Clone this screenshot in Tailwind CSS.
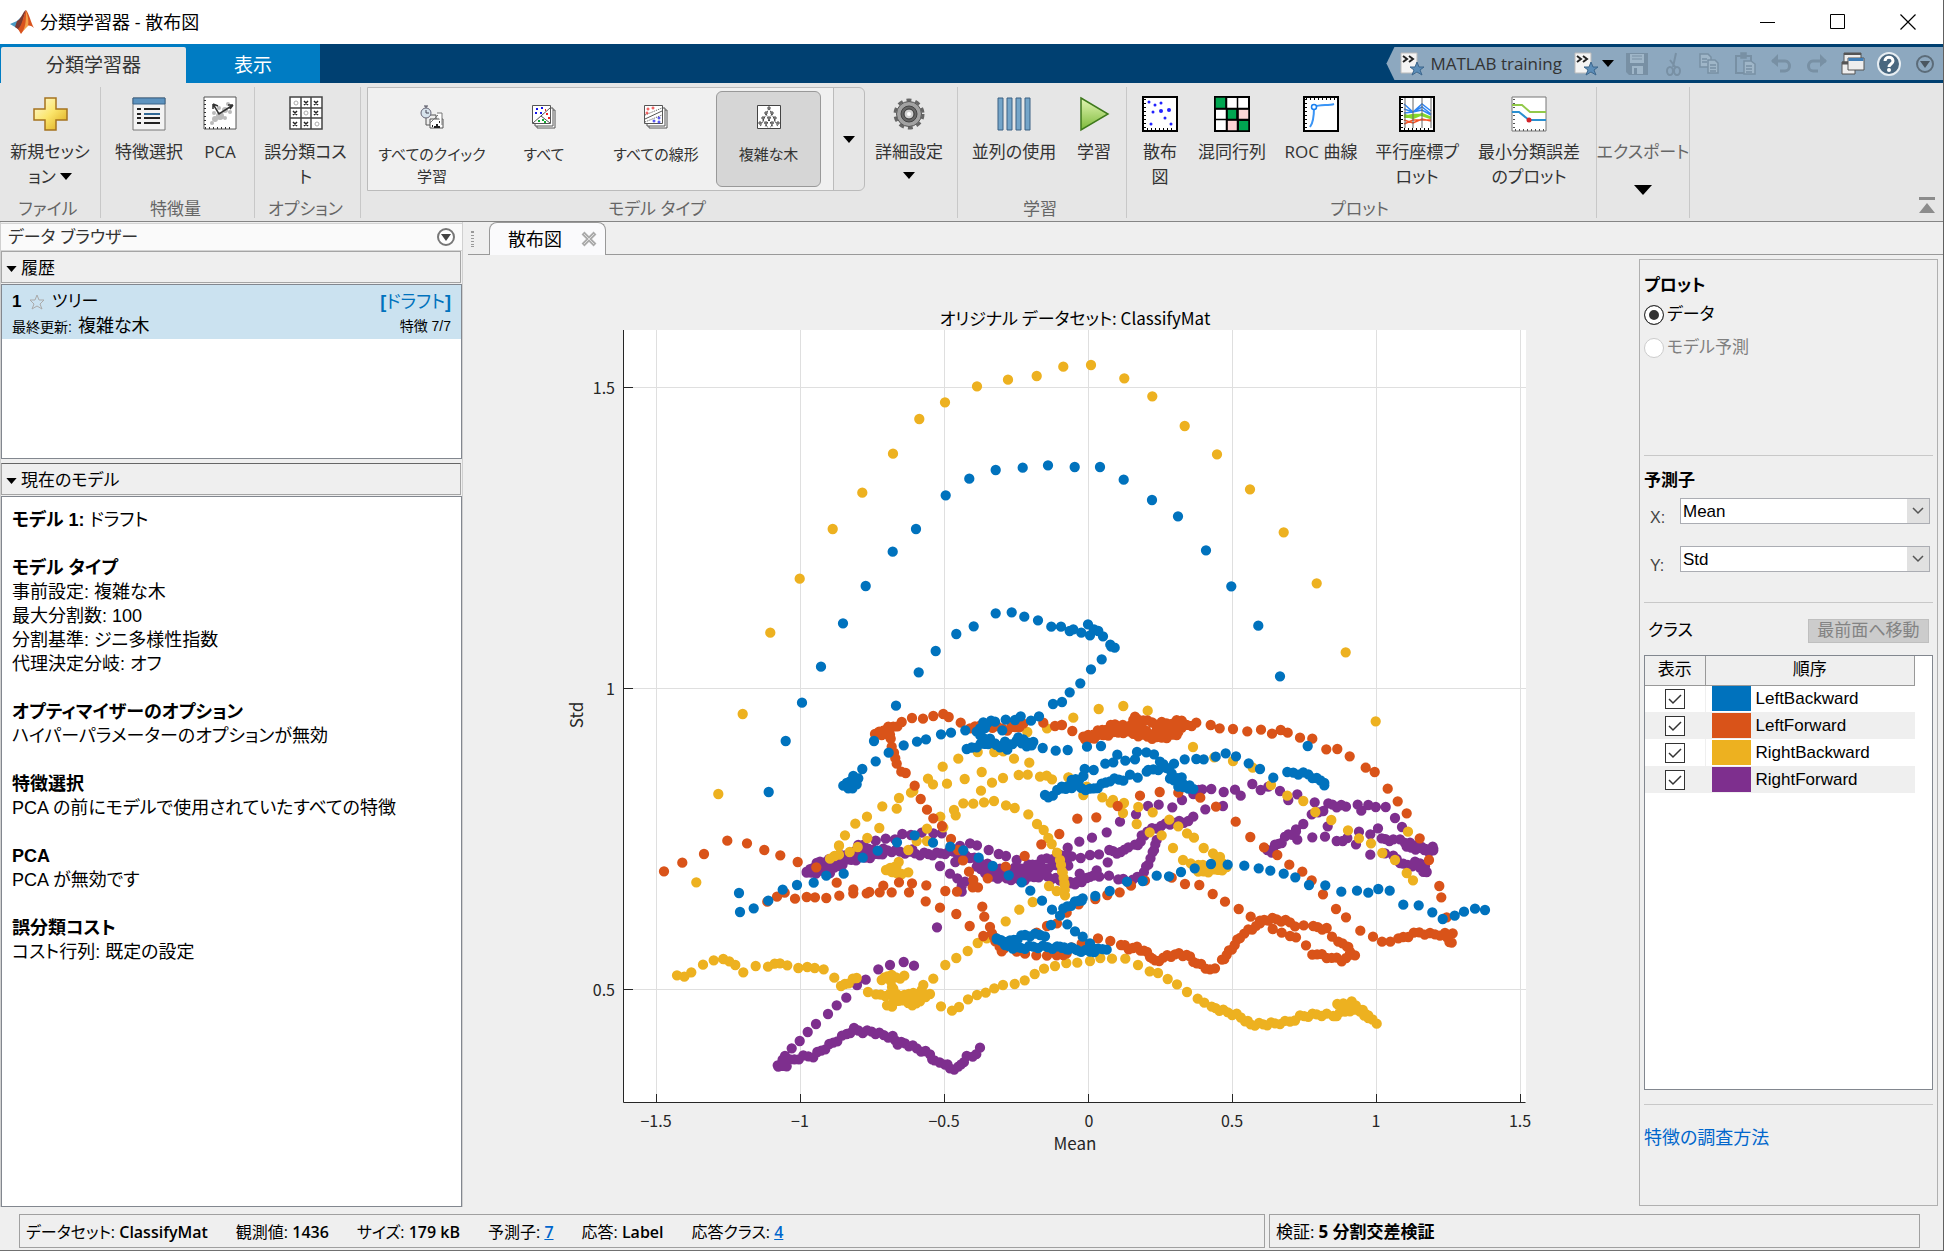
<!doctype html>
<html lang="ja">
  <head>
    <meta charset="UTF-8" />
    <meta name="viewport" content="width=device-width, initial-scale=1" />
    <title>分類学習器 - 散布図</title>
    <script src="https://cdn.jsdelivr.net/npm/@tailwindcss/browser@4"></script>
  </head>
  <body
    class="h-screen min-h-[900px] flex flex-col overflow-hidden bg-[#efefef] border-r border-[#606060] text-black font-['Open_Sans','Noto_Sans_CJK_JP',sans-serif] [font-feature-settings:'palt']"
  >
    <!-- タイトルバー -->
    <header class="h-11 shrink-0 flex items-center bg-white pl-[10px]">
      <svg class="w-6 h-6" viewBox="0 0 24 24">
        <path d="M0 14l7-3 4-4 3 4-5 8-4-2z" fill="#4a9ac4" />
        <path d="M7 11c4-1 6-10 9-11l-4 14-3 6-4-3z" fill="#7b3a33" />
        <path d="M16 0c3 3 5 13 8 18-4-3-6-3-8-1l-5 7-3-5c4-3 5-12 8-19z" fill="#d9531e" />
        <path d="M16 1c2 5 3 10 2 15l-5 5c3-6 3-12 3-20z" fill="#f3a04a" />
      </svg>
      <h1 class="ml-[6px] text-[18px] leading-6">分類学習器 - 散布図</h1>
      <div class="ml-auto flex items-center">
        <button class="w-[70px] h-11 grid place-items-center" aria-label="最小化">
          <svg class="w-4 h-4" viewBox="0 0 16 16"><path d="M0 8.500h15" stroke="#000" /></svg>
        </button>
        <button class="w-[70px] h-11 grid place-items-center" aria-label="最大化">
          <svg class="w-4 h-4" viewBox="0 0 16 16"><path d="M.5.5h14v14h-14z" fill="none" stroke="#000" /></svg>
        </button>
        <button class="w-[70px] h-11 grid place-items-center" aria-label="閉じる">
          <svg class="w-4 h-4" viewBox="0 0 16 16"><path d="M.5.5l15 15M15.500.5l-15 15" stroke="#000" stroke-width="1.200" /></svg>
        </button>
      </div>
    </header>

    <!-- タブとクイックアクセス -->
    <nav class="h-[39px] shrink-0 flex bg-[#004071] text-[19px]">
      <div class="flex bg-[#007cc3] pl-px pt-[3px]">
        <button class="w-[185px] bg-[#e6e6e6] rounded-t-xs text-[#333]">分類学習器</button>
        <button class="w-[134px] text-white">表示</button>
      </div>
      <div
        class="ml-auto my-[3px] pl-[14px] pr-[6px] flex items-center bg-[#8da8bf] [clip-path:polygon(8px_0,100%_0,100%_100%,8px_100%,0_50%)]"
      >
        <button class="flex items-center text-[17px] text-[#333]">
          <svg class="w-6 h-6 mr-[6px]" viewBox="0 0 24 24">
            <path d="M1 1h16v20H1z" fill="#f4f4f4" stroke="#bbb" />
            <path d="M3 4l4 3-4 3M9 4l4 3-4 3" fill="none" stroke="#222" stroke-width="2" />
            <path d="M17 10l2 5h5l-4 3 2 5-5-3-5 3 2-5-4-3h5z" fill="#5b8db8" stroke="#3d678c" />
          </svg>
          MATLAB training
        </button>
        <button class="ml-3 flex items-center" aria-label="お気に入り">
          <svg class="w-6 h-6" viewBox="0 0 24 24">
            <path d="M1 1h16v20H1z" fill="#f4f4f4" stroke="#bbb" />
            <path d="M3 4l4 3-4 3M9 4l4 3-4 3" fill="none" stroke="#222" stroke-width="2" />
            <path d="M17 10l2 5h5l-4 3 2 5-5-3-5 3 2-5-4-3h5z" fill="#5b8db8" stroke="#3d678c" />
          </svg>
          <svg class="ml-1 w-3 h-[7px]" viewBox="0 0 12 7"><path d="M0 0h12L6 7z" /></svg>
        </button>
        <div class="ml-[11px] flex items-center gap-3">
          <button aria-label="保存">
            <svg class="block w-6 h-6" viewBox="0 0 24 24">
              <path d="M1 1h22v22H4l-3-3z" fill="#7890a4" />
              <path d="M5 2h14v9H5zM7 14h11v8H7z" fill="#9fb6c8" />
              <path d="M7 4h10M7 7h10" stroke="#7890a4" />
              <path d="M9 16h3v6H9z" fill="#7890a4" />
            </svg>
          </button>
          <button aria-label="切り取り">
            <svg class="block w-6 h-6" viewBox="0 0 24 24" fill="none" stroke="#7890a4" stroke-width="2">
              <path d="M15 1l-3 14M9 8l6 8" />
              <ellipse cx="9" cy="19" rx="3" ry="4" />
              <ellipse cx="16" cy="19" rx="3" ry="4" />
            </svg>
          </button>
          <button aria-label="コピー">
            <svg class="block w-6 h-6" viewBox="0 0 24 24" fill="#9fb6c8" stroke="#7890a4" stroke-width="1.500">
              <path d="M3 2h8l3 3v10H3z" />
              <path d="M5 7h5M5 10h5" />
              <path d="M11 8h7l3 3v10H11z" />
              <path d="M13 13h6M13 16h6M13 19h6" />
            </svg>
          </button>
          <button aria-label="貼り付け">
            <svg class="block w-6 h-6" viewBox="0 0 24 24" fill="#8da8bf" stroke="#7890a4" stroke-width="1.500">
              <path d="M3 4h15v17H3z" stroke-width="2" />
              <path d="M8 1h5v5H8z" fill="#7890a4" />
              <path d="M11 9h7l4 3v10H11z" fill="#9fb6c8" />
              <path d="M13 14h6M13 17h6M13 20h6" />
            </svg>
          </button>
          <button aria-label="元に戻す">
            <svg class="block w-6 h-6" viewBox="0 0 24 24" fill="none" stroke="#7890a4" stroke-width="3">
              <path d="M3 9h13c6 0 6 10 0 10h-5" />
              <path d="M9 2L2 9l7 6z" fill="#7890a4" stroke="none" />
            </svg>
          </button>
          <button aria-label="やり直し">
            <svg class="block w-6 h-6" viewBox="0 0 24 24" fill="none" stroke="#7890a4" stroke-width="3">
              <path d="M21 9H8c-6 0-6 10 0 10h5" />
              <path d="M15 2l7 7-7 6z" fill="#7890a4" stroke="none" />
            </svg>
          </button>
          <button aria-label="ウィンドウ">
            <svg class="block w-6 h-6" viewBox="0 0 24 24" fill="#eee" stroke="#555">
              <path d="M3 1h17v12H3z" />
              <path d="M3 2h17" stroke-width="2" />
              <path d="M1 10h13v12H1z" />
              <path d="M1 11h13" stroke-width="3" />
              <path d="M7 6h16v12H7z" />
              <path d="M7.500 7.500h15" stroke="#3f7db5" stroke-width="3" />
            </svg>
          </button>
          <button aria-label="ヘルプ">
            <svg class="block w-6 h-6" viewBox="0 0 24 24">
              <circle cx="12" cy="12" r="11" fill="#49677f" stroke="#e6edf2" stroke-width="2" />
              <path d="M8 9c0-5 8-5 8 0 0 3-4 3-4 6" fill="none" stroke="#fff" stroke-width="3" />
              <circle cx="12" cy="18" r="2" fill="#fff" />
            </svg>
          </button>
          <button aria-label="ツールバーのメニュー">
            <svg class="block w-6 h-6" viewBox="0 0 24 24">
              <circle cx="12" cy="12" r="8" fill="none" stroke="#5c6c79" stroke-width="2" />
              <path d="M7 9h10l-5 7z" fill="#4a5660" />
            </svg>
          </button>
        </div>
      </div>
    </nav>

    <!-- リボン -->
    <div
      class="h-[139px] shrink-0 flex bg-[#e6e6e6] border-b border-[#858585] pt-1 pb-[3px] text-[17px] leading-[25px] text-[#333] text-center"
    >
      <section class="w-[101px] shrink-0 flex flex-col border-r border-[#c8c8c8]">
        <div class="flex-1 flex justify-center">
          <button class="w-full pt-[9px] flex flex-col items-center">
            <svg class="w-9 h-9 mb-[7px]" viewBox="0 0 36 36">
              <defs>
                <linearGradient id="gold" x1="0" y1="0" x2="1" y2="1">
                  <stop offset="0" stop-color="#fffce0" />
                  <stop offset=".5" stop-color="#fbe56b" />
                  <stop offset="1" stop-color="#d9a412" />
                </linearGradient>
              </defs>
              <path d="M13 2h11v11h11v11H24v10H13V24H2V13h11z" fill="url(#gold)" stroke="#a5731f" stroke-width="1.500" />
            </svg>
            <span>新規セッシ<br />ョン<svg class="inline ml-1 mb-1 w-3 h-[7px]" viewBox="0 0 12 7"><path d="M0 0h12L6 7z" /></svg></span>
          </button>
        </div>
        <h2 class="pr-1 leading-[19px] text-[#666]">ファイル</h2>
      </section>

      <section class="w-[154px] shrink-0 flex flex-col border-r border-[#c8c8c8]">
        <div class="flex-1 flex pl-2">
          <button class="w-20 pt-[9px] flex flex-col items-center">
            <svg class="w-9 h-9 mb-[7px]" viewBox="0 0 36 36">
              <path d="M2 2h32v32H2z" fill="#f3f3f3" stroke="#777" />
              <path d="M2 2h32v6H2z" fill="#5d93bf" stroke="#3a6387" />
              <path d="M6 13h4M6 18h4M6 22h4M6 27h4M13 13h16M13 22h16M13 27h16" stroke="#222" stroke-width="2" />
              <path d="M13 18h16" stroke="#2f6896" stroke-width="2" />
            </svg>
            特徴選択
          </button>
          <button class="w-[62px] pt-[9px] flex flex-col items-center">
            <svg class="w-9 h-9 mb-[7px]" viewBox="0 0 36 36">
              <path d="M2 1h32v32H2z" fill="#fff" stroke="#555" />
              <g fill="#bbb">
                <circle cx="10" cy="27" r="2" /><circle cx="13" cy="23" r="3" /><circle cx="18" cy="20" r="4" />
                <circle cx="23" cy="14" r="3" /><circle cx="26" cy="8" r="2" /><circle cx="23" cy="22" r="2" />
                <circle cx="12" cy="17" r="2" /><circle cx="28" cy="16" r="2" /><circle cx="17" cy="12" r="2" />
              </g>
              <path d="M31 9L17 18 11 8M31 9l-5 0M31 9l-3 4M11 8v5M11 8l5 2" fill="none" stroke="#333" stroke-width="1.500" />
              <path d="M3 4v28h28" fill="none" stroke="#333" stroke-width="2" stroke-dasharray="1 3" />
            </svg>
            PCA
          </button>
        </div>
        <h2 class="pr-1 leading-[19px] text-[#666]">特徴量</h2>
      </section>

      <section class="w-[106px] shrink-0 flex flex-col border-r border-[#c8c8c8]">
        <button class="flex-1 pt-[9px] pr-1 flex flex-col items-center">
          <svg class="w-9 h-9 mb-[7px]" viewBox="0 0 36 36" fill="none">
            <path d="M2 1h32v32H2z" fill="#fff" />
            <path d="M2 1h32v32H2zM13 1v32M23 1v32M2 12h32M2 22h32" stroke="#444" stroke-width="1.500" />
            <path
              d="M16 5l4 4m0-4l-4 4M26 5l4 4m0-4l-4 4M5 15l4 4m0-4l-4 4M26 15l4 4m0-4l-4 4M5 26l4 4m0-4l-4 4M16 26l4 4m0-4l-4 4"
              stroke="#222" stroke-width="1.500"
            />
            <g stroke="#aaa"><circle cx="8" cy="7" r="2" /><circle cx="18" cy="17" r="2" /><circle cx="29" cy="28" r="2" /></g>
          </svg>
          <span>誤分類コス<br />ト</span>
        </button>
        <h2 class="pr-1 leading-[19px] text-[#666]">オプション</h2>
      </section>

      <section class="w-[597px] shrink-0 flex flex-col border-r border-[#c8c8c8]">
        <div class="flex-1 flex pl-[6px]">
          <div class="h-[104px] flex border border-[#bbb] rounded-r-md text-[15px] leading-[22px]">
            <div class="w-[465px] bg-[#f0f0f0] flex py-[3px] pl-2">
              <button class="w-28 flex flex-col items-center pt-[14px]">
                <svg class="w-6 h-6 mb-[14px]" viewBox="0 0 24 24" fill="#fff" stroke="#555">
                  <path d="M6 10h10v10H6z" fill="#eee" />
                  <path d="M10 14h13v9H10z" />
                  <path d="M17 8h5v12M10 18l8-8" stroke="#777" />
                  <path d="M12 21h1M16 20h2M19 17h1M14 22h6" stroke="#222" stroke-width="2" />
                  <circle cx="6" cy="8" r="5" fill="#d7e3ec" stroke="#667" />
                  <path d="M6 5v3h3M4 1h4M6 1v2" fill="none" stroke="#445" />
                </svg>
                <span>すべてのクイック<br />学習</span>
              </button>
              <button class="w-28 flex flex-col items-center pt-[14px]">
                <svg class="w-6 h-6 mb-[14px]" viewBox="0 0 24 24" fill="#fff" stroke="#555">
                  <path d="M5 5h18v18H5z" />
                  <path d="M3 3h18v18H3z" />
                  <path d="M.5.500h18v18h-18z" />
                  <path d="M1 18L18 3M9 11l9 7" />
                  <path d="M4 4h2M9 3h2M3 8h2M8 8h2" stroke="#11e" stroke-width="2" />
                  <path d="M14 9h2M16 13h2M13 5h1" stroke="#e22" stroke-width="2" />
                  <path d="M6 16h2M10 15h2M12 17h2" stroke="#1a3" stroke-width="2" />
                </svg>
                すべて
              </button>
              <button class="w-28 flex flex-col items-center pt-[14px]">
                <svg class="w-6 h-6 mb-[14px]" viewBox="0 0 24 24" fill="#fff" stroke="#555">
                  <path d="M5 5h18v18H5z" />
                  <path d="M3 3h18v18H3z" />
                  <path d="M.5.500h18v18h-18z" />
                  <path d="M1 14L18 6" />
                  <path d="M1 10l17-7M1 17l17-7" stroke-dasharray="1 1" />
                  <g fill="none" stroke="#e33"><circle cx="4" cy="4" r="1" /><circle cx="9" cy="3" r="1" /><circle cx="3" cy="8" r="1" /></g>
                  <g fill="none" stroke="#22e"><circle cx="10" cy="16" r="1" /><circle cx="15" cy="13" r="1" /><circle cx="15" cy="17" r="1" /></g>
                </svg>
                すべての線形
              </button>
              <button
                class="ml-1 w-[105px] flex flex-col items-center pt-[13px] bg-[#d6d6d6] border border-[#999] rounded-md"
                aria-pressed="true"
              >
                <svg class="w-6 h-6 mb-[14px]" viewBox="0 0 24 24" fill="#fff" stroke="#444">
                  <path d="M.5.500h23v23H.5z" />
                  <path d="M12 3L3 22M12 3l9 19M9 9l7 13M15 9L8 22M6 15l5 8M18 15l-5 8" stroke-dasharray="2 1" />
                  <path d="M11 2h2v2h-2zM8 7h2v2H8zM14 7h2v2h-2zM5 12h2v2H5zM11 12h2v2h-2zM17 12h2v2h-2zM2 17h2v2H2zM8 17h2v2H8zM14 17h2v2h-2zM20 17h2v2h-2z" />
                </svg>
                複雑な木
              </button>
            </div>
            <button class="w-[31px] border-l border-[#bbb] grid place-items-center" aria-label="その他のモデル">
              <svg class="w-3 h-[7px]" viewBox="0 0 12 7"><path d="M0 0h12L6 7z" fill="#000" /></svg>
            </button>
          </div>
          <button class="flex-1 pt-[9px] pr-1 flex flex-col items-center">
            <svg class="w-9 h-9 mb-[7px]" viewBox="0 0 36 36">
              <circle cx="18" cy="18" r="14" fill="none" stroke="#666" stroke-width="3" stroke-dasharray="5 4" />
              <circle cx="18" cy="18" r="12.500" fill="#a2a2a2" stroke="#555" />
              <circle cx="18" cy="18" r="8" fill="#666" stroke="#444" />
              <circle cx="18" cy="18" r="5" fill="#d0d0d0" stroke="#333" />
              <circle cx="18" cy="18" r="2" fill="#fff" />
            </svg>
            詳細設定
            <svg class="mt-2 w-3 h-[7px]" viewBox="0 0 12 7"><path d="M0 0h12L6 7z" fill="#000" /></svg>
          </button>
        </div>
        <h2 class="pr-1 leading-[19px] text-[#666]">モデル タイプ</h2>
      </section>

      <section class="w-[169px] shrink-0 flex flex-col border-r border-[#c8c8c8]">
        <div class="flex-1 flex pl-2">
          <button class="w-24 pt-[9px] flex flex-col items-center">
            <svg class="w-9 h-9 mb-[7px]" viewBox="0 0 36 36">
              <path d="M2 2h5v32H2zM11 2h5v32h-5zM20 2h5v32h-5zM29 2h5v32h-5z" fill="#74a5c9" stroke="#3a6183" />
            </svg>
            並列の使用
          </button>
          <button class="w-16 pt-[9px] flex flex-col items-center">
            <svg class="w-9 h-9 mb-[7px]" viewBox="0 0 36 36">
              <defs>
                <linearGradient id="go" x1="0" y1="0" x2="0" y2="1">
                  <stop offset="0" stop-color="#e4f7b4" />
                  <stop offset="1" stop-color="#7cb93a" />
                </linearGradient>
              </defs>
              <path d="M5 2l27 16L5 34z" fill="url(#go)" stroke="#3f7a1d" stroke-width="1.500" />
            </svg>
            学習
          </button>
        </div>
        <h2 class="pr-1 leading-[19px] text-[#666]">学習</h2>
      </section>

      <section class="w-[470px] shrink-0 flex flex-col border-r border-[#c8c8c8]">
        <div class="flex-1 flex pl-2">
          <button class="w-[50px] pt-[9px] flex flex-col items-center">
            <svg class="w-9 h-9 mb-[7px]" viewBox="0 0 36 36">
              <path d="M1 1h34v34H1z" fill="#fff" stroke="#000" stroke-width="2" />
              <path d="M3 3v30h30" fill="none" stroke="#000" stroke-width="2" stroke-dasharray="1 3" />
              <g fill="#22f">
                <circle cx="7" cy="6" r="1.500" /><circle cx="13" cy="9" r="1.500" /><circle cx="19" cy="7" r="1.500" />
                <circle cx="11" cy="16" r="1.500" /><circle cx="19" cy="15" r="2" /><circle cx="27" cy="14" r="2" />
                <circle cx="23" cy="22" r="1.500" /><circle cx="9" cy="28" r="1.500" /><circle cx="29" cy="28" r="1.500" />
              </g>
            </svg>
            <span>散布<br />図</span>
          </button>
          <button class="w-[94px] pt-[9px] flex flex-col items-center">
            <svg class="w-9 h-9 mb-[7px]" viewBox="0 0 36 36" stroke="#000" stroke-width="1.500">
              <path d="M1 1h34v34H1z" fill="#fff" stroke-width="2" />
              <path d="M1 1h11v12H1zM13 13h10v11H13zM24 24h11v11H24z" fill="#00a651" />
              <path d="M24 13h11v11H24zM13 24h11v11H13z" fill="#fbd5d5" />
              <path d="M12.500 1v34M23.500 1v34M1 12.500h34M1 23.500h34" />
            </svg>
            混同行列
          </button>
          <button class="w-[84px] pt-[9px] flex flex-col items-center">
            <svg class="w-9 h-9 mb-[7px]" viewBox="0 0 36 36" fill="none">
              <path d="M1 1h34v34H1z" fill="#fff" stroke="#000" stroke-width="2" />
              <path d="M3 3h30M3 3v30" stroke="#000" stroke-width="2" stroke-dasharray="1 3" />
              <path d="M7 31c4-5 4-13 4-20 6-3 14-1 20-3" stroke="#3a94f5" stroke-width="2" />
              <circle cx="11" cy="11" r="2.500" stroke="#1a80f0" stroke-width="1.500" fill="#fff" />
            </svg>
            ROC 曲線
          </button>
          <button class="w-[108px] pt-[9px] flex flex-col items-center">
            <svg class="w-9 h-9 mb-[7px]" viewBox="0 0 36 36" fill="none">
              <path d="M1 1h34v34H1z" fill="#fff" stroke="#000" stroke-width="2" />
              <path d="M5 8l9 8 9-8 9 7M5 13l9 3 9-5 9 7M5 17l9-1 9-2 9 5" stroke="#2f86f5" stroke-width="1.500" />
              <path d="M5 21l9-2 9 0 9 3M5 19l9 3 9-4 9 4" stroke="#86d82a" stroke-width="2.500" />
              <path d="M5 28l9-4 9 0 9 0M5 24l9 3 9-4 9 2" stroke="#f5552a" stroke-width="1.500" />
              <path d="M6 2v30M14 2v30M23 2v30M32 2v30" stroke="#666" />
              <path d="M3 3v30h30" stroke="#000" stroke-width="2" stroke-dasharray="1 3" />
            </svg>
            <span>平行座標プ<br />ロット</span>
          </button>
          <button class="w-[116px] pt-[9px] flex flex-col items-center">
            <svg class="w-9 h-9 mb-[7px]" viewBox="0 0 36 36" fill="none">
              <path d="M1 1h34v34H1z" fill="#fff" stroke="#777" />
              <path d="M3 3v31h30" stroke="#555" stroke-width="2" stroke-dasharray="1 3" />
              <path d="M1 9h10l8 7h16" stroke="#92c94a" stroke-width="2" />
              <path d="M1 16h7l10 8h17" stroke="#2b8fd0" stroke-width="2" />
              <circle cx="18" cy="24" r="2.500" fill="#d2232a" />
            </svg>
            <span>最小分類誤差<br />のプロット</span>
          </button>
        </div>
        <h2 class="pr-1 leading-[19px] text-[#666]">プロット</h2>
      </section>

      <section class="w-[93px] shrink-0 border-r border-[#c8c8c8] text-[#666]">
        <button class="w-full pt-[52px] flex flex-col items-center whitespace-nowrap">
          エクスポート
          <svg class="mt-[21px] w-[18px] h-[10px]" viewBox="0 0 18 10"><path d="M0 0h18L9 10z" fill="#000" /></svg>
        </button>
      </section>
      <button class="ml-auto mr-2 self-end mb-1" aria-label="リボンを最小化">
        <svg class="block w-4 h-[17px]" viewBox="0 0 16 17"><path d="M0 0h16v3H0zM8 6l8 10H0z" fill="#8c8c8c" /></svg>
      </button>
    </div>

    <div class="flex-1 min-h-0 flex">
      <!-- データ ブラウザー -->
      <aside
        class="w-[463px] shrink-0 flex flex-col border-l border-r border-[#d0d0d0] pt-px font-['Liberation_Sans','Noto_Sans_CJK_JP',sans-serif]"
      >
        <div class="h-7 shrink-0 flex items-center justify-between bg-[#fafafa] border-y border-[#d4d4d4] pl-[7px] pr-[6px]">
          <h2 class="pt-[2px] text-[17px] leading-6 text-[#333]">データ ブラウザー</h2>
          <button aria-label="データ ブラウザーのメニュー">
            <svg class="block w-5 h-5" viewBox="0 0 20 20">
              <circle cx="10" cy="10" r="8" fill="#fff" stroke="#777" stroke-width="2" />
              <path d="M5 7h10l-5 7z" fill="#444" />
            </svg>
          </button>
        </div>
        <button class="h-8 shrink-0 mr-px flex items-center gap-1 border border-[#a5a5a5] bg-[#efefef] pl-1 pt-[3px] text-[17px]">
          <svg class="w-[11px] h-[6px]" viewBox="0 0 12 7"><path d="M0 0h12L6 7z" /></svg>
          履歴
        </button>
        <ul class="h-[175px] shrink-0 mt-px bg-white border border-[#82878f]">
          <li class="h-[54px] bg-[#cbe2f0] px-[10px] pt-[5px] flex justify-between">
            <div class="leading-6">
              <div class="flex items-center text-[17px]">
                <b class="w-[17px]">1</b>
                <svg class="w-4 h-4 mr-[7px]" viewBox="0 0 16 16"><path d="M8 1l2 5h5l-4 4 2 5-5-3-5 3 2-5-4-4h5z" fill="none" stroke="#aaa" /></svg>
                ツリー
              </div>
              <div class="text-[18px]"><span class="mr-[6px] text-[14px]">最終更新:</span>複雑な木</div>
            </div>
            <div class="leading-6 text-right">
              <a href="#" class="block text-[18px] text-[#0072bd]"><b>[</b>ドラフト<b>]</b></a>
              <span class="text-[14px]">特徴 7/7</span>
            </div>
          </li>
        </ul>
        <button class="h-8 shrink-0 mt-1 mr-px flex items-center gap-1 border border-[#a5a5a5] border-t-[#666] bg-[#efefef] pl-1 pt-[3px] text-[17px]">
          <svg class="w-[11px] h-[6px]" viewBox="0 0 12 7"><path d="M0 0h12L6 7z" /></svg>
          現在のモデル
        </button>
        <div class="flex-1 mt-px bg-white border border-[#82878f] pt-[11px] pl-[10px] text-[18px] leading-6 flex flex-col gap-6">
          <p><b>モデル 1:</b> ドラフト</p>
          <p><b>モデル タイプ</b><br />事前設定: 複雑な木<br />最大分割数: 100<br />分割基準: ジニ多様性指数<br />代理決定分岐: オフ</p>
          <p><b>オプティマイザーのオプション</b><br />ハイパーパラメーターのオプションが無効</p>
          <p><b>特徴選択</b><br />PCA の前にモデルで使用されていたすべての特徴</p>
          <p><b>PCA</b><br />PCA が無効です</p>
          <p><b>誤分類コスト</b><br />コスト行列: 既定の設定</p>
        </div>
      </aside>

      <main class="flex-1 min-w-0 flex flex-col">
        <!-- ドキュメントタブ -->
        <div class="h-[33px] shrink-0 flex pl-[5px]">
          <div class="w-[21px] border-b border-[#999] pt-[9px] pl-[3px]">
            <div class="w-[3px] h-4 border-y border-[#999] bg-[repeating-linear-gradient(#999_0_1px,transparent_1px_3px)]"></div>
          </div>
          <div class="w-[117px] flex items-center justify-between rounded-t-lg border border-b-0 border-[#999] bg-[#fafafc] pl-[18px] pr-2 text-[18px]">
            散布図
            <button aria-label="タブを閉じる">
              <svg class="block w-4 h-4" viewBox="0 0 16 16"><path d="M2 2l12 12M14 2L2 14" stroke="#aaa" stroke-width="4" /><path d="M3 3l10 10M13 3L3 13" stroke="#ddd" /></svg>
            </button>
          </div>
          <div class="flex-1 border-b border-[#999]"></div>
        </div>

        <div class="flex-1 min-h-0 flex">
          <!-- 散布図 -->
          <div class="flex-1 min-w-0">
            <svg
              class="block w-full h-full font-['Noto_Sans_CJK_JP',sans-serif]"
              viewBox="-1 -1 1176 952"
              fill="#262626"
              font-size="16"
            >
              <path d="M160 74h902v772H160z" fill="#fff" />
              <path
                d="M192.500 74v772M336.500 74v772M480.500 74v772M624.500 74v772M768.500 74v772M912.500 74v772M1056.500 74v772M160 131.500h902M160 432.500h902M160 733.500h902"
                stroke="#dfdfdf"
              />
              <path
                d="M159.500 74v772.500h902M192.500 846v-8M336.500 846v-8M480.500 846v-8M624.500 846v-8M768.500 846v-8M912.500 846v-8M1056.500 846v-8M160 131.500h9M160 432.500h9M160 733.500h9"
                stroke="#262626" fill="none"
              />
              <g id="series" stroke-width="10.300" stroke-linecap="round" fill="none"></g>
              <text x="611" y="69" text-anchor="middle" font-size="17" fill="#000">オリジナル データセット: ClassifyMat</text>
              <g text-anchor="middle">
                <text x="192" y="871">−1.5</text>
                <text x="336" y="871">−1</text>
                <text x="480" y="871">−0.5</text>
                <text x="625" y="871">0</text>
                <text x="768" y="871">0.5</text>
                <text x="912" y="871">1</text>
                <text x="1056" y="871">1.5</text>
                <text x="611" y="894" font-size="17">Mean</text>
                <text transform="translate(119 459) rotate(-90)" font-size="17">Std</text>
              </g>
              <g text-anchor="end">
                <text x="151" y="138">1.5</text>
                <text x="151" y="439">1</text>
                <text x="151" y="740">0.5</text>
              </g>
            </svg>
          </div>

          <!-- 表示設定 -->
          <aside
            class="w-[299px] shrink-0 mr-[5px] mt-1 mb-px border border-[#b0b0b0] px-1 flex flex-col text-[17px] leading-6 font-['Liberation_Sans','Noto_Sans_CJK_JP',sans-serif]"
          >
            <fieldset class="h-[196px] shrink-0 border-b border-[#c8c8c8] pt-[14px]">
              <legend class="float-left w-full font-bold">プロット</legend>
              <label class="clear-both flex items-center gap-[3px] h-[33px]">
                <input type="radio" name="plot" checked class="appearance-none w-5 h-5 rounded-full border border-[#333] bg-white checked:bg-[#333] checked:shadow-[inset_0_0_0_4px_#fff]" />
                データ
              </label>
              <label class="flex items-center gap-[3px] h-[33px] text-[#808080]">
                <input type="radio" name="plot" disabled class="appearance-none w-5 h-5 rounded-full border border-[#ccc] bg-white" />
                モデル予測
              </label>
            </fieldset>
            <div class="h-[147px] shrink-0 border-b border-[#c8c8c8] pt-[13px]">
              <h3 class="font-bold">予測子</h3>
              <div class="mt-[5px] flex pl-[6px] pr-[3px]">
                <label for="xvar" class="w-[30px] pt-2 text-[#444] text-[16px]">X:</label>
                <div class="relative flex-1">
                  <select id="xvar" class="block appearance-none w-full h-[26px] border border-[#abadb3] bg-white pl-[2px] pt-[2px] text-[17px] leading-[22px]">
                    <option>Mean</option>
                  </select>
                  <svg class="absolute right-px top-px w-[22px] h-6 bg-[#e1e1e1] pointer-events-none" viewBox="0 0 22 24"><path d="M6 9l5 5 5-5" fill="none" stroke="#555" stroke-width="1.500" /></svg>
                </div>
              </div>
              <div class="mt-4 flex pl-[6px] pr-[3px]">
                <label for="yvar" class="w-[30px] pt-2 text-[#444] text-[16px]">Y:</label>
                <div class="relative flex-1">
                  <select id="yvar" class="block appearance-none w-full h-[26px] border border-[#abadb3] bg-white pl-[2px] pt-[2px] text-[17px] leading-[22px]">
                    <option>Std</option>
                  </select>
                  <svg class="absolute right-px top-px w-[22px] h-6 bg-[#e1e1e1] pointer-events-none" viewBox="0 0 22 24"><path d="M6 9l5 5 5-5" fill="none" stroke="#555" stroke-width="1.500" /></svg>
                </div>
              </div>
            </div>
            <div class="mt-4 mb-3 shrink-0 flex items-center justify-between pl-1 pr-1">
              <h3>クラス</h3>
              <button disabled class="h-6 w-[121px] border border-[#bfbfbf] bg-[#ccc] text-[#838383] leading-[22px] whitespace-nowrap">最前面へ移動</button>
            </div>
            <div class="flex-1 min-h-0 border border-[#82878f] bg-white">
              <table class="w-[270px] border-collapse">
                <thead class="bg-[#efefef]">
                  <tr class="h-[29px] border-b border-[#999]">
                    <th class="w-[60px] border-r border-[#999] font-normal">表示</th>
                    <th class="border-r border-[#999] font-normal">順序</th>
                  </tr>
                </thead>
                <tbody id="classRows"></tbody>
              </table>
            </div>
            <div class="shrink-0 mt-[14px] h-[101px] border-t border-[#c8c8c8] pt-[21px]">
              <a href="#" class="text-[18px] text-[#0066cc]">特徴の調査方法</a>
            </div>
          </aside>
        </div>
      </main>
    </div>

    <!-- ステータスバー -->
    <footer class="h-11 shrink-0 flex gap-1 border-b border-[#707070] pt-[7px] pb-[2px] pl-[19px] pr-[23px] text-[16px] leading-6">
      <dl class="w-[1246px] flex items-center gap-7 border border-[#a0a0a0] pl-[6px] pt-[2px] [&_dt]:inline [&_dd]:inline [&_dd]:font-semibold">
        <div><dt>データセット:</dt> <dd>ClassifyMat</dd></div>
        <div><dt>観測値:</dt> <dd>1436</dd></div>
        <div><dt>サイズ:</dt> <dd>179 kB</dd></div>
        <div><dt>予測子:</dt> <dd><a href="#" class="text-[#0066cc] underline">7</a></dd></div>
        <div><dt>応答:</dt> <dd>Label</dd></div>
        <div><dt>応答クラス:</dt> <dd><a href="#" class="text-[#0066cc] underline">4</a></dd></div>
      </dl>
      <p class="flex-1 flex items-center gap-1 border border-[#a0a0a0] pl-[6px] pt-[2px] text-[17px]">検証: <b>5 分割交差検証</b></p>
    </footer>

    <script>
      // 点は 1/3 px 単位。origin は各領域の左上
      const origins = { a: [136, 54], b: [596, 54], c: [136, 434], d: [596, 434] };

      // dots: 個別の点 / runs: 密集した軌跡
      const series = [
        {
          name: "RightForward",
          color: "#7e2f8e",
          dots: {
            c: "1011 712 942 827 911 816 870 825 835 838 797 869 771 885 739 923 710 946 684 972 648 1002 623 1026 599 1053 575 1075 775 465 790 465 827 452 857 446 885 448 907 432 933 435 965 428 1000 430 1025 430 1020 528 1050 551 1072 565 1085 605 1095 575 1066 516 1110 460 1131 466 1166 480 1196 492 1218 498 1250 510 1403 473 1080 468 1085 588 937 478",
            d: "416 300 427 298 454 297 491 306 525 299 542 317 400 312 577 282 602 300 625 290 660 303 712 313 685 330 764 337 366 330 337 352 296 344 264 348 228 373 180 395 140 427 96 443 58 455 23 473 489 348 436 358 147 557 110 543 118 560 59 551 143 517 117 493 90 495 62 504 25 527 893 344 904 362 925 345 947 351 977 351 1005 384 1026 411 954 415 931 433 897 425 803 409 790 363 755 373 775 367 730 402 708 418 712 449 757 442 795 440 888 463 931 494 975 490",
          },
          runs: {
            c: [
              "555 1098 533 1130 570 1112 610 1100 640 1098 676 1074 712 1050 740 1032 762 1018 788 1025 815 1025 838 1032 878 1042 893 1060 915 1060 950 1075 990 1093 1003 1115 1035 1120 1050 1135 1075 1134 1100 1102 1118 1100 1140 1077",
              "535 1130 560 1125",
              "620 545 660 515 700 510 740 495 790 480 850 480 900 485 960 492 1010 492 1060 485 1110 500 1150 520 1200 540 1260 535 1310 520 1340 505 1400 500",
              "620 548 690 545 740 512 810 500 860 485",
              "640 535 680 525 740 505",
              "1130 530 1180 560 1220 565 1260 570 1330 555 1380 572 1425 583",
              "1155 545 1250 550 1330 535 1400 520",
            ],
            d: [
              "400 380 385 393 330 400 290 412 262 425 245 440 242 455 225 468",
              "290 450 278 490 265 520 245 560 205 573 175 568",
              "35 580 80 568 110 545",
              "148 480 182 490 205 468",
              "0 495 35 503",
              "805 340 830 348 858 350",
              "830 453 848 453 862 440",
              "965 445 1000 452 1020 448 1050 462 1085 475 1120 480",
              "1040 470 1120 485 1118 470",
              "622 480 635 488 645 468 665 455 685 433 708 428",
              "1000 497 1030 525 1070 525 1100 550",
              "1065 515 1095 525",
            ],
          },
        },
        {
          name: "RightBackward",
          color: "#edb120",
          dots: {
            a: "1131 229 1224 209 1310 198 1390 170 1035 277 958 327 879 431 787 548 698 657 599 806 511 968",
            b: "93 165 193 205 277 259 374 348 471 433 570 538 671 667 770 820 857 1027",
            c: "428 72 355 312 289 577 1420 83 1341 115 1282 126 1133 186 1183 186 1210 184 1075 206 1028 230 1242 206 1288 218 984 266 999 283 1041 281 1094 267 1145 246 1143 302 1176 278 1209 264 1256 255 1283 254 1320 260 1340 257 1356 268 1405 262 897 324 933 308 940 303 847 349 890 356 801 380 766 401 838 414 735 436 802 444 717 468 773 471 749 486 1090 340 1120 341 1152 337 1182 333 1218 346 1244 354 1285 373 1062 360 1067 376 1021 380 1030 412 981 416 950 453 981 453 925 480 1311 402 1331 420 1345 444 1355 462 1371 488 1347 588 1370 603 925 547 1298 636 1258 659 1217 694 1133 759 1160 745 1103 783 1069 804 1036 825 1000 866 970 885 231 856 253 860 274 847 309 824 341 811 370 807 388 814 406 825 430 847 467 828 504 830 524 821 540 820 562 826 595 834 622 831 644 834 671 838 703 863 804 906 828 913 1023 949 1056 962 1077 951 1104 928 1131 915 1157 908 1183 895 1209 885 1244 882 1274 871 1304 852 1332 836 1365 828 1399 819",
            d: "116 57 190 48 263 62 947 94 399 171 463 202 519 213 578 233 633 285 682 317 730 333 766 366 814 390 864 421 897 445 933 460 967 489 1005 510 1040 549 1059 571 1044 425 26 262 70 315 80 290 127 322 152 338 159 330 192 339 189 369 235 351 278 367 230 402 269 427 305 436 328 389 355 409 381 430 402 443 339 474 431 474 459 490 369 510 392 520 52 818 90 813 121 804 156 806 196 806 234 825 269 844 294 849 323 867 351 883 381 906 413 926 433 938 19 819",
          },
          runs: {
            c: [
              "1380 510 1386 540 1393 575 1395 612",
              "690 506 717 490 717 470",
              "858 540 896 520 876 550 905 548",
              "723 888 770 864",
              "845 870 862 855 888 862 913 861",
              "868 860 880 900 900 925 940 905",
              "828 913 870 915 910 935 950 920 990 916",
              "861 946 876 950 880 910 925 935 937 950 960 930 965 900",
            ],
            d: [
              "415 545 460 542 500 535 480 505 460 525",
              "415 525 470 525",
              "455 950 490 963 530 975 555 990 572 1003 610 1003 645 1000 690 995 720 980 770 973 800 975 820 978 840 970 870 960 900 965 925 980 950 997",
              "832 942 850 940 875 938 900 955 925 980",
            ],
          },
        },
        {
          name: "LeftForward",
          color: "#d95319",
          dots: {
            c: "192 544 247 518 312 492 382 452 441 460 493 480 541 496 593 516 649 532 710 578 760 598 718 617 679 624 645 622 620 621 585 626 554 608 531 620 502 635 760 610 800 610 808 606 839 607 850 587 875 607 897 577 936 580 979 586 927 607 977 634 1020 653 1069 672 1109 708 1150 738 1036 603 1071 605 1147 650 1153 680 1170 711 1250 785 1275 791 1309 796 1341 797 1370 796 1400 790 904 245 917 249 944 287 962 327 981 359 1000 385 1026 408 1053 447 1074 480 1089 511 1107 545 1120 570 1118 592 1134 592 1163 565 1217 530 1274 498 1324 463 1378 432 936 84 969 86 1000 78 1030 72 1046 81 1082 98 1330 98 1365 108 1385 105 1417 123 1341 708 1371 700 1400 668 1310 728",
            d: "6 105 37 123 452 105 479 115 519 117 562 124 603 119 636 131 662 120 683 128 720 143 757 146 799 178 832 177 869 199 917 233 944 246 983 296 1013 334 1040 370 1079 445 1107 510 1138 588 1144 622 1160 682 1178 730 240 317 299 306 355 308 421 323 173 348 109 382 52 386 468 350 527 395 571 441 612 472 652 495 688 524 727 545 755 571 789 613 828 657 858 682 901 722 939 740 966 755 991 755 335 563 375 582 418 585 458 612 495 635 536 657 572 680 255 572 213 587 179 607 142 615 106 627 56 643 20 668 731 706 816 740 738 766 708 742 690 738 665 728 638 717 151 753 114 745 65 760 35 772 10 795",
          },
          runs: {
            c: [
              "825 132 850 118 880 110 905 100",
              "845 135 870 130 872 150 875 170 882 192 890 217",
              "1176 730 1186 750 1205 780 1212 780",
              "1110 115 1140 103 1190 112 1222 118 1270 105",
            ],
            d: [
              "70 140 100 130 140 115 165 103 200 112 230 85 250 95",
              "75 148 130 135 190 125 235 135 290 145 350 135",
              "225 80 235 90 290 100 320 100 365 92",
              "300 125 350 110 395 108 409 94",
              "290 110 320 130 355 130",
              "225 112 270 132 320 115",
              "1015 745 1045 737 1078 727 1110 733 1155 733 1175 762",
              "600 692 625 688 650 688 690 697 705 705",
              "760 708 800 718",
              "835 755 860 765 870 785 885 792 845 810 800 800 757 790",
              "600 700 565 722 540 740 524 765 507 785 486 813",
              "465 835 450 838 410 820 380 795 345 793 310 803 285 815 270 797 252 782 231 774 206 774 183 765",
            ],
          },
        },
        {
          name: "LeftBackward",
          color: "#0072bd",
          dots: {
            a: "1108 506 1187 480 1268 473 1344 466 1424 471 1037 556 948 657 878 725 797 828 729 940 663 1070 606 1178 1187 910 1235 907 1273 920 1314 931 1354 950 1383 950 1121 949 1069 972 1007 1023 956 1087 888 1187 1359 1182 1386 1176",
            b: "120 471 191 509 276 570 354 619 438 721 514 829 595 947 660 1099 29 963 40 958 64 968 84 943 90 976 102 958 115 963 129 979 151 1004 154 1010 164 1013 125 1048 93 1078 61 1120 29 1147",
            c: "557 153 506 306 417 609 420 666 461 655 505 632 548 599 591 585 641 578 679 557 731 551 788 503 833 482 891 457 944 436 999 458 1051 470 1090 481 1136 503 1178 528 1226 556 1265 577 1291 602 1326 632 1356 659 1380 677 1353 705 822 153 866 188 911 166 951 155 978 148 1023 133 1053 128 1096 121 827 214 787 237 1217 89 1245 90 1262 79 1293 92 1317 79 1207 121 1328 174 1367 182 1403 180 1402 703",
            d: "81 170 123 168 172 194 136 221 160 217 196 212 225 208 231 186 259 187 282 193 342 221 374 208 409 207 431 208 467 200 497 190 528 199 566 220 600 237 640 263 743 168 74 237 101 240 210 254 233 263 260 245 553 527 596 535 631 542 671 551 706 562 747 585 796 586 844 605 891 602 925 608 955 597 989 602 1030 644 1076 646 1117 667 1148 687 1184 677 1212 665 1245 656 1275 660 503 524 453 522 404 535 363 546 327 559 290 557 248 573 201 575 149 603 106 618 68 625 45 724 68 740 90 760",
          },
          runs: {
            c: [
              "730 287 760 262 775 265 745 295 770 287",
              "1140 115 1150 97 1185 95",
              "1130 125 1155 110 1140 135 1170 150 1185 160",
              "1100 177 1130 168 1165 158 1200 168 1250 155 1295 170",
              "1255 142 1300 160",
              "1215 155 1222 175",
              "1335 315 1345 322 1385 295 1410 290",
              "1190 748 1230 755 1275 735 1335 735",
              "1215 765 1250 775 1300 770 1400 774 1440 780",
              "1190 745 1225 765",
            ],
            d: [
              "682 246 700 248 745 253 770 268 793 275 793 290",
              "300 215 320 230 335 250 355 270 400 297",
              "265 240 310 235",
              "365 262 330 270",
              "355 290 385 292",
              "35 270 70 262",
              "5 290 50 290 90 300 125 285 150 270 190 268",
              "10 655 45 638 65 628",
              "0 770 50 780 90 785 140 775",
              "90 760 100 775",
            ],
          },
        },
      ];

      function pairs(text) {
        const n = text.split(" ").map(Number);
        const out = [];
        for (let i = 0; i < n.length; i += 2) out.push([n[i], n[i + 1]]);
        return out;
      }

      // 軌跡に沿って一定間隔で点を置く（上下に少しばらつかせる）
      function fill(points, step) {
        const out = [points[0]];
        for (let i = 1; i < points.length; i++) {
          const [x0, y0] = points[i - 1];
          const [x1, y1] = points[i];
          const count = Math.max(1, Math.round(Math.hypot(x1 - x0, y1 - y0) / step));
          for (let k = 1; k <= count; k++) {
            const shift = ((out.length % 3) - 1) * 4;
            out.push([x0 + ((x1 - x0) * k) / count, y0 + ((y1 - y0) * k) / count + shift]);
          }
        }
        return out;
      }

      function toPath(points, [ox, oy]) {
        return points.map(([x, y]) => `M${(ox + x / 3).toFixed(1)} ${(oy + y / 3).toFixed(1)}h0`).join("");
      }

      document.getElementById("series").innerHTML = series
        .map(({ color, dots, runs }) => {
          let d = "";
          for (const zone in dots) d += toPath(pairs(dots[zone]), origins[zone]);
          for (const zone in runs) {
            for (const run of runs[zone]) d += toPath(fill(pairs(run), 14), origins[zone]);
          }
          return `<path d="${d}" stroke="${color}" />`;
        })
        .join("");

      document.getElementById("classRows").innerHTML = [...series]
        .reverse()
        .map(
          ({ name, color }) => `
        <tr class="h-[27px] even:bg-[#efefef]">
          <td class="border-r border-[#efefef]">
            <label class="grid place-items-center">
              <input type="checkbox" checked aria-label="${name}" class="[grid-area:1/1] appearance-none w-5 h-5 border border-[#333] bg-white" />
              <svg class="[grid-area:1/1] w-5 h-5 pointer-events-none" viewBox="0 0 20 20"><path d="M4 10l4 4 8-8" fill="none" stroke="#333" stroke-width="1.500" /></svg>
            </label>
          </td>
          <td class="pl-[6px]">
            <div class="flex items-center gap-[5px] leading-[25px]">
              <span class="w-[39px] h-[25px]" style="background: ${color}"></span>${name}
            </div>
          </td>
        </tr>`
        )
        .join("");
    </script>
  </body>
</html>
